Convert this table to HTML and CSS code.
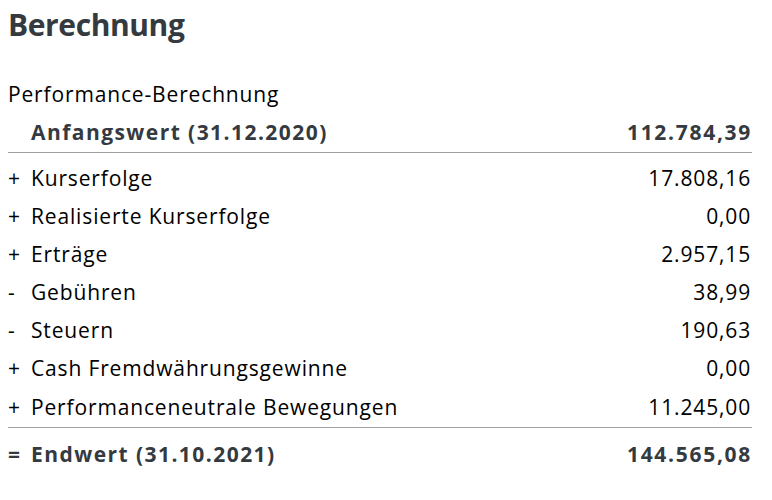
FILE: index.html
```html
<!DOCTYPE html>
<html lang="de">
<head>
<meta charset="utf-8">
<link rel="stylesheet" href="styles.css">
</head>
<body>
<h2 class="title">Berechnung</h2>
<div class="subtitle">Performance-Berechnung</div>
<table class="calc">
  <tbody>
    <tr class="total start">
      <td class="op"></td><td class="label">Anfangswert (31.12.2020)</td><td class="num">112.784,39</td>
    </tr>
    <tr class="first">
      <td class="op">+</td><td class="label">Kurserfolge</td><td class="num">17.808,16</td>
    </tr>
    <tr>
      <td class="op">+</td><td class="label">Realisierte Kurserfolge</td><td class="num">0,00</td>
    </tr>
    <tr>
      <td class="op">+</td><td class="label">Erträge</td><td class="num">2.957,15</td>
    </tr>
    <tr>
      <td class="op">-</td><td class="label">Gebühren</td><td class="num">38,99</td>
    </tr>
    <tr>
      <td class="op">-</td><td class="label">Steuern</td><td class="num">190,63</td>
    </tr>
    <tr>
      <td class="op">+</td><td class="label">Cash Fremdwährungsgewinne</td><td class="num">0,00</td>
    </tr>
    <tr class="last">
      <td class="op">+</td><td class="label">Performanceneutrale Bewegungen</td><td class="num">11.245,00</td>
    </tr>
    <tr class="total end">
      <td class="op">=</td><td class="label">Endwert (31.10.2021)</td><td class="num">144.565,08</td>
    </tr>
  </tbody>
</table>
</body>
</html>
```
FILE: styles.css
```css
body {
  margin: 8px;
  font-family: "Open Sans", "Noto Sans", sans-serif;
  color: #000;
  background: #fff;
}
.title {
  margin: 0;
  font-size: 30px;
  font-weight: 700;
  letter-spacing: -0.4px;
  line-height: 34px;
  color: #343a40;
}
.subtitle {
  margin-top: 37px;
  font-size: 21px;
  letter-spacing: 0.85px;
  line-height: 30px;
}
.calc {
  margin-left: -2px;
  width: 746px;
  border-collapse: collapse;
  font-size: 21px;
  letter-spacing: 0.85px;
  line-height: 30px;
}
.calc td {
  padding: 4px 2px;
  white-space: nowrap;
}
.calc .op {
  width: 19px;
  letter-spacing: 0;
}
.calc .num {
  text-align: right;
  padding-right: 1px;
}
.calc .total {
  font-weight: 700;
  color: #343a40;
  letter-spacing: 1.45px;
}
.calc .total .num {
  letter-spacing: 1.7px;
  padding-right: 0;
}
.calc .total .op {
  letter-spacing: 0;
}
.calc .start td {
  padding-top: 8px;
  padding-bottom: 5px;
  border-bottom: 1px solid #a0a0a0;
}
.calc .first td {
  padding-top: 10px;
}
.calc .last td {
  padding-top: 5px;
  padding-bottom: 5px;
  border-bottom: 1px solid #a0a0a0;
}
.calc .end td {
  padding-top: 11px;
}
```
